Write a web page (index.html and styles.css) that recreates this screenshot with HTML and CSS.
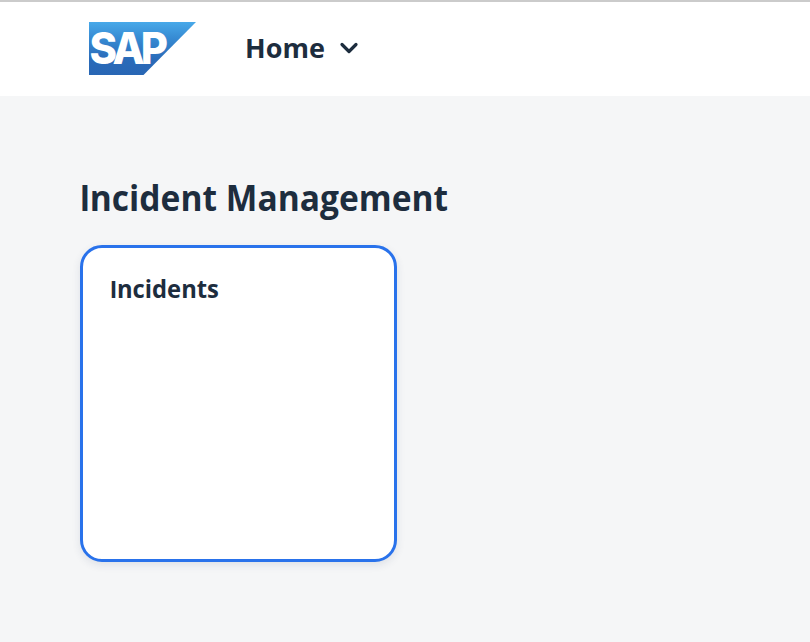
FILE: index.html
```html
<!DOCTYPE html>
<html lang="en">
<head>
<meta charset="utf-8">
<title>Home</title>
<link rel="stylesheet" href="styles.css">
</head>
<body>
<header class="shell">
  <svg class="logo" viewBox="0 0 107 53" role="img" aria-label="SAP">
    <defs>
      <linearGradient id="brand" x1="0" y1="0" x2="0" y2="1">
        <stop offset="0" stop-color="#48a9e9"/>
        <stop offset=".3" stop-color="#378bd3"/>
        <stop offset=".7" stop-color="#2a6bb9"/>
        <stop offset="1" stop-color="#2866b4"/>
      </linearGradient>
    </defs>
    <path d="M0 0H107L54.500 53H0Z" fill="url(#brand)"/>
    <text class="logo-text" transform="translate(.6 42) scale(.96 1)">SAP</text>
  </svg>
  <button class="nav" type="button">
    <span class="nav-label">Home</span>
    <svg class="chevron" viewBox="0 0 20 14"><path d="M3 3.500L10 10.500L17 3.500"/></svg>
  </button>
</header>
<main class="content">
  <h1 class="group-title"><span class="initial">I</span>ncident Management</h1>
  <a class="tile"><span class="tile-title"><span class="initial">I</span>ncidents</span></a>
</main>
</body>
</html>
```
FILE: styles.css
```css
* { box-sizing: border-box; }
body {
  margin: 0;
  min-height: 642px;
  background: #f5f6f7;
  color: #1d2d3e;
  font-family: "Open Sans", "Noto Sans", sans-serif;
}
.shell {
  display: flex;
  align-items: center;
  height: 96px;
  padding: 0 0 2px 89px;
  border-top: 2px solid #cbcbcb;
  background: #fff;
}
.logo { width: 107px; height: 53px; }
.logo-text {
  fill: #fff;
  font-family: Inter, sans-serif;
  font-size: 43.5px;
  font-weight: 850;
  letter-spacing: -4px;
}
.nav {
  display: flex;
  align-items: center;
  gap: 14px;
  margin-left: 49px;
  padding: 0;
  border: 0;
  background: none;
  color: inherit;
  font: 700 27px/36px "Open Sans", "Noto Sans", sans-serif;
}
.nav-label { width: 80px; }
.chevron {
  width: 20px;
  height: 14px;
  fill: none;
  stroke: #1d2d3e;
  stroke-width: 3.200;
  stroke-linecap: round;
  stroke-linejoin: round;
}
.content { padding: 77px 80px; }
.group-title {
  width: max-content;
  margin: 0 0 22px;
  font-size: 36px;
  line-height: 50px;
  font-weight: 750;
  white-space: nowrap;
  transform: scaleX(.932);
  transform-origin: left;
}
.initial {
  font-family: Roboto, sans-serif;
  line-height: 1;
}
.tile {
  display: block;
  width: 317px;
  height: 317px;
  padding: 24px 27px;
  border: 3px solid #2972eb;
  border-radius: 22px;
  background: #fff;
  box-shadow: 0 3px 8px rgba(34, 53, 100, .11);
}
.tile-title {
  display: block;
  width: max-content;
  font-size: 24.5px;
  line-height: 34px;
  font-weight: 700;
  transform: scaleX(.97);
  transform-origin: left;
}
```
